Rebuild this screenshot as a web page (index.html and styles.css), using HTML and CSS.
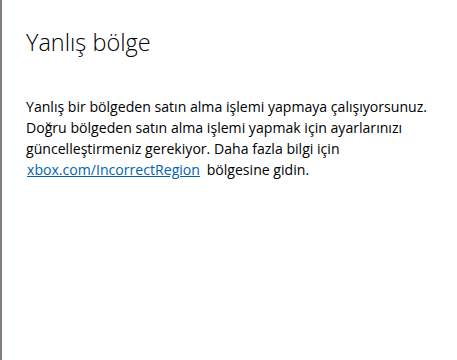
FILE: index.html
```html
<!DOCTYPE html>
<html lang="tr">
<head>
<meta charset="utf-8">
<link rel="stylesheet" href="styles.css">
</head>
<body>
<div class="dialog">
  <h1 class="title">Yanlış bölge</h1>
  <p class="message">Yanlış bir bölgeden satın alma işlemi yapmaya çalışıyorsunuz. Doğru bölgeden satın alma işlemi yapmak için ayarlarınızı güncelleştirmeniz gerekiyor. Daha fazla bilgi için <a class="link" href="#">xbox.com/IncorrectRegion</a> bölgesine gidin.</p>
</div>
</body>
</html>
```
FILE: styles.css
```css
html, body {
  margin: 0;
  padding: 0;
  background: #ffffff;
}
.dialog {
  box-sizing: border-box;
  width: 457px;
  height: 360px;
  border-left: 2px solid #877d7d;
  padding: 26px 20px 0 24px;
  font-family: "Open Sans", "Noto Sans", sans-serif;
}
.title {
  margin: 0;
  font-size: 23.5px;
  font-weight: 300;
  line-height: 32px;
  color: #000000;
}
.message {
  margin: 38px 0 0 0;
  font-size: 14.1px;
  line-height: 21px;
  color: #000000;
}
.link {
  color: #0063b1;
  text-decoration: underline;
  padding: 0 3px 0 1px;
}
```
